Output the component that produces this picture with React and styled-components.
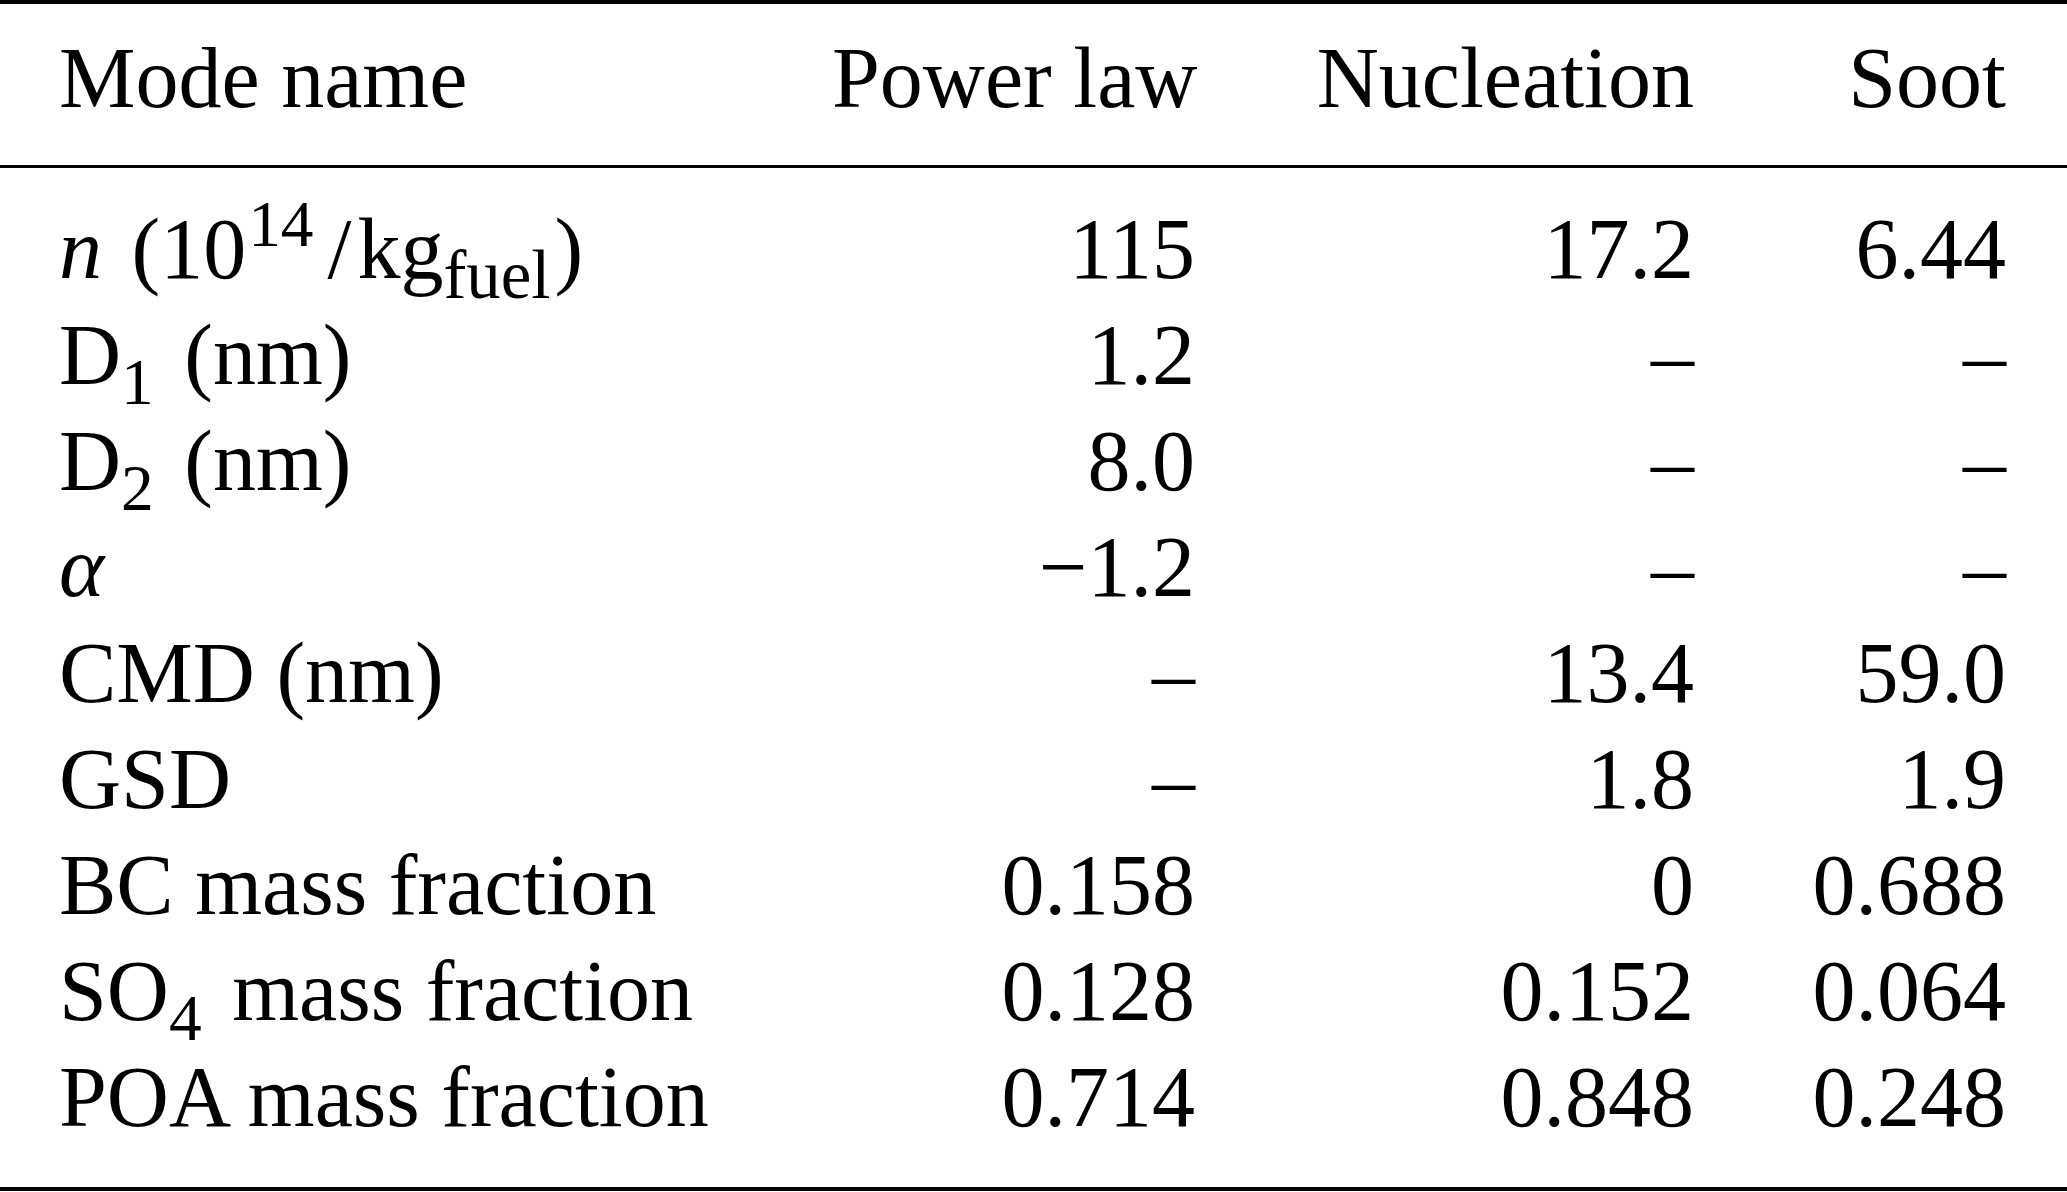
import React from "react";
import styled, { createGlobalStyle } from "styled-components";

const GlobalStyle = createGlobalStyle`
  html, body {
    margin: 0;
    padding: 0;
    background: #ffffff;
  }
  body {
    font-family: "Liberation Serif", "Times New Roman", serif;
    color: #000000;
  }
`;

const Table = styled.div`
  width: 2067px;
  border-top: 4px solid #000;
  border-bottom: 4px solid #000;
  font-size: 86px;
  line-height: 106px;
`;

const Row = styled.div`
  display: grid;
  grid-template-columns: 773px 481px 499px 1fr;
`;

const HeadRow = styled(Row)`
  padding: 21px 0 34px;
  border-bottom: 3px solid #000;
`;

const Body = styled.div`
  padding: 28px 0 37px;
`;

const Cell = styled.div`
  padding: 0 59px;
  white-space: nowrap;
  text-align: ${(p) => (p.$align === "left" ? "left" : "right")};

  &:last-child {
    padding-right: 61px;
  }
`;

const Sup = styled.span`
  font-size: 0.76em;
  line-height: 0;
  vertical-align: 32px;
  margin: 0 14px 0 2px;
`;

const Sub = styled.span`
  font-size: ${(p) => (p.$word ? "0.8em" : "0.76em")};
  line-height: 0;
  vertical-align: -20px;
  margin-right: ${(p) => (p.$word ? "4px" : "9px")};
`;

const Slash = styled.span`
  margin-right: 6px;
`;

const Var = styled.i`
  font-style: italic;
  margin-right: ${(p) => (p.$gap ? "8px" : "0")};
`;

const rows = [
  {
    label: (
      <>
        <Var $gap>n</Var> (10<Sup>14</Sup>
        <Slash>/</Slash>kg<Sub $word>fuel</Sub>)
      </>
    ),
    values: ["115", "17.2", "6.44"],
  },
  {
    label: (
      <>
        D<Sub>1</Sub> (nm)
      </>
    ),
    values: ["1.2", "–", "–"],
  },
  {
    label: (
      <>
        D<Sub>2</Sub> (nm)
      </>
    ),
    values: ["8.0", "–", "–"],
  },
  { label: <Var>α</Var>, values: ["−1.2", "–", "–"] },
  { label: "CMD (nm)", values: ["–", "13.4", "59.0"] },
  { label: "GSD", values: ["–", "1.8", "1.9"] },
  { label: "BC mass fraction", values: ["0.158", "0", "0.688"] },
  {
    label: (
      <>
        SO<Sub>4</Sub> mass fraction
      </>
    ),
    values: ["0.128", "0.152", "0.064"],
  },
  { label: "POA mass fraction", values: ["0.714", "0.848", "0.248"] },
];

const App = () => {
  return (
    <>
      <GlobalStyle />
      <Table>
        <HeadRow>
          <Cell $align="left">Mode name</Cell>
          <Cell>Power law</Cell>
          <Cell>Nucleation</Cell>
          <Cell>Soot</Cell>
        </HeadRow>
        <Body>
          {rows.map((row, i) => (
            <Row key={i}>
              <Cell $align="left">{row.label}</Cell>
              {row.values.map((v, j) => (
                <Cell key={j}>{v}</Cell>
              ))}
            </Row>
          ))}
        </Body>
      </Table>
    </>
  );
};

export default App;
